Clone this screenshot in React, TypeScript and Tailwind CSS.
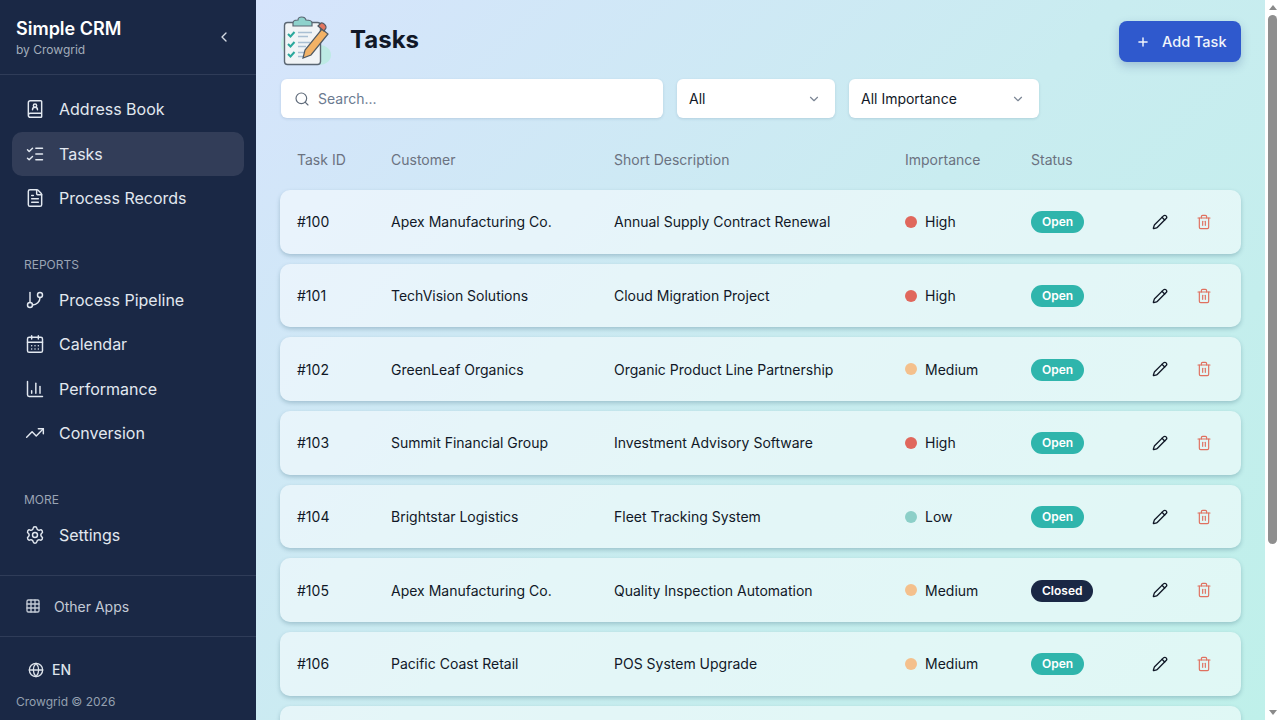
import { ChartColumn, BookUser, CalendarDays, ChevronDown, ChevronLeft, FileText, GitBranch, Globe, Grid3x3, ListChecks, Pencil, Plus, Search, Settings, Trash2, TrendingUp } from "lucide-react";

const tasks = [
  { id: "#100", customer: "Apex Manufacturing Co.", description: "Annual Supply Contract Renewal", importance: "High", status: "Open" },
  { id: "#101", customer: "TechVision Solutions", description: "Cloud Migration Project", importance: "High", status: "Open" },
  { id: "#102", customer: "GreenLeaf Organics", description: "Organic Product Line Partnership", importance: "Medium", status: "Open" },
  { id: "#103", customer: "Summit Financial Group", description: "Investment Advisory Software", importance: "High", status: "Open" },
  { id: "#104", customer: "Brightstar Logistics", description: "Fleet Tracking System", importance: "Low", status: "Open" },
  { id: "#105", customer: "Apex Manufacturing Co.", description: "Quality Inspection Automation", importance: "Medium", status: "Closed" },
  { id: "#106", customer: "Pacific Coast Retail", description: "POS System Upgrade", importance: "Medium", status: "Open" },
  { id: "#107", customer: "Apex Manufacturing Co.", description: "Warehouse Audit", importance: "Low", status: "Open" },
];

const dotStyles: Record<string, string> = {
  High: "bg-[#e0675c]",
  Medium: "bg-[#f4c08c]",
  Low: "bg-[#8ccfc8]",
};

const gridCols = "grid grid-cols-[94px_223px_291px_126px_1fr] items-center px-[17px]";

function NavItem({ icon: Icon, label, active }: { icon: typeof Search; label: string; active?: boolean }) {
  return (
    <div className={`flex h-[44.5px] items-center gap-[14px] rounded-[10px] pl-[12px] text-[16px] text-[#e2e8f0] ${active ? "bg-[#323d58]" : ""}`}>
      <Icon className="h-[20px] w-[20px] shrink-0 ml-[1px]" strokeWidth={1.75} />
      <span>{label}</span>
    </div>
  );
}

function ClipboardArt() {
  return (
    <svg viewBox="0 0 52 52" className="h-[52px] w-[52px] shrink-0">
      <ellipse cx="10" cy="30" rx="9" ry="11" fill="#c5eee6" />
      <ellipse cx="40" cy="41" rx="11" ry="10" fill="#bdeae4" />
      <rect x="4.5" y="8.5" width="36" height="42" rx="3" fill="#f1f4f6" stroke="#5a6672" strokeWidth="1.4" />
      <path d="M13 9 c0-3 4-3 5-3 c0-4 7-4 8 0 c2 0 6 0 6 3 v3 h-19z" fill="#8ed2cc" stroke="#5a6672" strokeWidth="1.2" />
      <path d="M8 20l2.5 2.5 4-4.5M8 30l2.5 2.5 4-4.5M8 40l2.5 2.5 4-4.5" fill="none" stroke="#2aa89c" strokeWidth="2" />
      <path d="M18 18.5h14M18 22.5h10M18 28.5h12M18 32.5h8M18 38.5h8M18 42.5h6" stroke="#a9bfd3" strokeWidth="1.4" />
      <path d="M27 47l2-8 17-21 6 5-17 21z" transform="translate(-4 -3)" fill="#f2b266" stroke="#4f5963" strokeWidth="1.2" />
      <path d="M42 15l6 5 2-3c1-2-3-6-5-5z" transform="translate(-4 -3)" fill="#e2755f" stroke="#4f5963" strokeWidth="1.2" />
    </svg>
  );
}

export default function App() {
  return (
    <div className="flex h-screen overflow-hidden font-['Inter',sans-serif]">
      <aside className="flex h-full w-[256px] shrink-0 flex-col bg-[#1a2845]">
        <div className="flex h-[75px] items-center justify-between border-b border-[#2f3c58] pl-[16px] pr-[24px]">
          <div>
            <div className="text-[18px] font-semibold leading-[26px] text-white">Simple CRM</div>
            <div className="text-[12px] leading-[16px] text-[#a3adbb]">by Crowgrid</div>
          </div>
          <ChevronLeft className="h-[16px] w-[16px] text-[#d5dbe4]" />
        </div>
        <nav className="flex flex-col px-[12px] pt-[12px]">
          <NavItem icon={BookUser} label="Address Book" />
          <NavItem icon={ListChecks} label="Tasks" active />
          <NavItem icon={FileText} label="Process Records" />
          <div className="ml-[12px] mt-[36px] mb-[5px] text-[12px] leading-[16px] text-[#9aa4b4]">REPORTS</div>
          <NavItem icon={GitBranch} label="Process Pipeline" />
          <NavItem icon={CalendarDays} label="Calendar" />
          <NavItem icon={ChartColumn} label="Performance" />
          <NavItem icon={TrendingUp} label="Conversion" />
          <div className="ml-[12px] mt-[36px] mb-[5px] text-[12px] leading-[16px] text-[#9aa4b4]">MORE</div>
          <NavItem icon={Settings} label="Settings" />
        </nav>
        <div className="mt-[18px] flex h-[62px] items-center gap-[13px] border-y border-[#2f3c58] pl-[25px] text-[14px] text-[#c3cad5]">
          <Grid3x3 className="h-[16px] w-[16px]" />
          <span>Other Apps</span>
        </div>
        <div className="flex items-center gap-[8px] pl-[28px] pt-[23px] text-[14px] font-medium leading-[20px] text-[#dde3ea]">
          <Globe className="h-[16px] w-[16px]" />
          <span>EN</span>
        </div>
        <div className="pl-[16px] pt-[14px] text-[12px] leading-[16px] text-[#94a0b0]">Crowgrid © 2026</div>
      </aside>

      <main className="h-full min-w-0 flex-1 overflow-hidden bg-[linear-gradient(135deg,#d6e4fc_0%,#c9ecf0_50%,#bff0ea_100%)] pl-[24px] pr-[24px]">
        <div className="flex h-[79px] items-start justify-between">
          <div className="mt-[14px] flex items-center gap-[18px]">
            <ClipboardArt />
            <h1 className="text-[24px] font-bold leading-[32px] text-[#111827]">Tasks</h1>
          </div>
          <button className="mt-[21px] flex h-[41px] w-[122px] items-center gap-[12px] rounded-[8px] bg-[#2f59cd] pl-[17px] text-[14.5px] font-medium text-[#f1f5fb] shadow-[0_4px_10px_rgba(30,60,130,0.25)]">
            <Plus className="h-[14px] w-[14px]" strokeWidth={2.5} />
            <span>Add Task</span>
          </button>
        </div>

        <div className="ml-[1px] flex h-[39px] gap-[14px]">
          <div className="flex w-[382px] items-center gap-[8px] rounded-[6px] bg-white pl-[13px] text-[14px] text-[#6b7a90] shadow-[0_1px_3px_rgba(30,60,100,0.15)]">
            <Search className="h-[16px] w-[16px] text-[#5f6b7a]" strokeWidth={1.75} />
            <span>Search...</span>
          </div>
          <div className="flex w-[158px] items-center justify-between rounded-[6px] bg-white pl-[12px] pr-[14px] text-[14px] text-[#111827] shadow-[0_1px_3px_rgba(30,60,100,0.15)]">
            <span>All</span>
            <ChevronDown className="h-[14px] w-[14px] text-[#7b8594]" />
          </div>
          <div className="flex w-[190px] items-center justify-between rounded-[6px] bg-white pl-[12px] pr-[14px] text-[14px] text-[#111827] shadow-[0_1px_3px_rgba(30,60,100,0.15)]">
            <span>All Importance</span>
            <ChevronDown className="h-[14px] w-[14px] text-[#7b8594]" />
          </div>
        </div>

        <div className={`${gridCols} h-[72px] pt-[10px] text-[14px] text-[#6b7280]`}>
          <span>Task ID</span>
          <span>Customer</span>
          <span>Short Description</span>
          <span>Importance</span>
          <span>Status</span>
        </div>

        <div className="flex flex-col gap-[10px]">
          {tasks.map((task) => (
            <div key={task.id} className={`${gridCols} h-[63.7px] shrink-0 rounded-[10px] bg-white/50 text-[14px] text-[#111827] shadow-[0_2px_4px_rgba(40,90,110,0.28)]`}>
              <span>{task.id}</span>
              <span>{task.customer}</span>
              <span>{task.description}</span>
              <span className="flex items-center gap-[8px]">
                <span className={`h-[12px] w-[12px] rounded-full ${dotStyles[task.importance]}`} />
                {task.importance}
              </span>
              <div className="flex items-center">
                <span className={`w-[79px] shrink-0`}>
                  <span className={`inline-flex h-[22px] items-center rounded-full px-[11px] text-[12px] font-semibold text-white ${task.status === "Open" ? "bg-[#2fb5ac]" : "bg-[#1a2845]"}`}>
                    {task.status}
                  </span>
                </span>
                <Pencil className="ml-[42px] h-[16px] w-[16px] text-[#111827]" strokeWidth={2} />
                <Trash2 className="ml-[28px] h-[16px] w-[16px] text-[#e0705f]" strokeWidth={1.75} />
              </div>
            </div>
          ))}
        </div>
      </main>

      <div className="flex h-full w-[15px] shrink-0 flex-col items-center bg-white">
        <div className="mt-[5px] h-0 w-0 border-x-[4px] border-b-[5px] border-x-transparent border-b-[#8a8a8a]" />
        <div className="mt-[5px] h-[529px] w-[9px] rounded-full bg-[#8f8f8f]" />
        <div className="mt-auto mb-[5px] h-0 w-0 border-x-[4px] border-t-[5px] border-x-transparent border-t-[#8a8a8a]" />
      </div>
    </div>
  );
}
